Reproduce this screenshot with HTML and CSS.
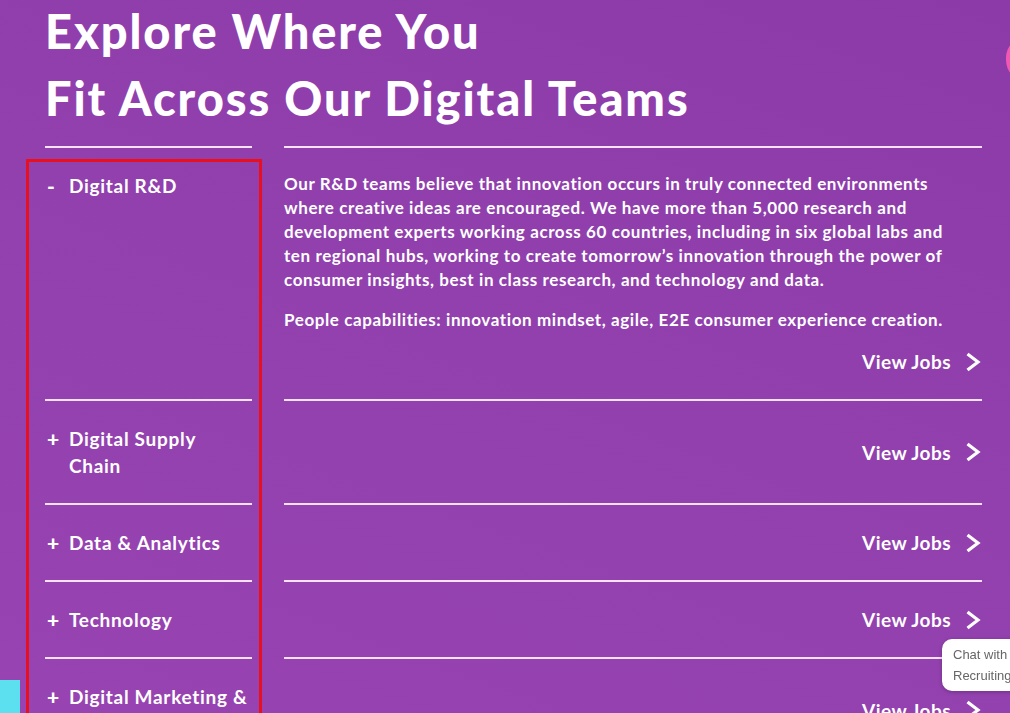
FILE: index.html
```html
<!DOCTYPE html>
<html lang="en">
<head>
<meta charset="utf-8">
<title>Explore Where You Fit Across Our Digital Teams</title>
<link rel="stylesheet" href="styles.css">
</head>
<body>
<main class="page">
  <section class="teams">
    <h1 class="title">Explore Where You<br>Fit Across Our Digital Teams</h1>
    <div class="accordion">
      <div class="highlight"></div>

      <div class="row open">
        <div class="name"><span class="sign">-</span><span>Digital R&amp;D</span></div>
        <div class="detail">
          <p>Our R&amp;D teams believe that innovation occurs in truly connected environments where creative ideas are encouraged. We have more than 5,000 research and development experts working across 60 countries, including in six global labs and ten regional hubs, working to create tomorrow’s innovation through the power of consumer insights, best in class research, and technology and data.</p>
          <p>People capabilities: innovation mindset, agile, E2E consumer experience creation.</p>
          <a class="jobs" href="#">View Jobs <svg viewBox="0 0 16 20" width="16" height="20"><path d="M2.5 2 L13 10 L2.5 18" fill="none" stroke="#fff" stroke-width="3.2" stroke-linejoin="miter"/></svg></a>
        </div>
      </div>

      <div class="row">
        <div class="name"><span class="sign">+</span><span>Digital Supply Chain</span></div>
        <div class="detail">
          <a class="jobs" href="#">View Jobs <svg viewBox="0 0 16 20" width="16" height="20"><path d="M2.5 2 L13 10 L2.5 18" fill="none" stroke="#fff" stroke-width="3.2" stroke-linejoin="miter"/></svg></a>
        </div>
      </div>

      <div class="row">
        <div class="name"><span class="sign">+</span><span>Data &amp; Analytics</span></div>
        <div class="detail">
          <a class="jobs" href="#">View Jobs <svg viewBox="0 0 16 20" width="16" height="20"><path d="M2.5 2 L13 10 L2.5 18" fill="none" stroke="#fff" stroke-width="3.2" stroke-linejoin="miter"/></svg></a>
        </div>
      </div>

      <div class="row">
        <div class="name"><span class="sign">+</span><span>Technology</span></div>
        <div class="detail">
          <a class="jobs" href="#">View Jobs <svg viewBox="0 0 16 20" width="16" height="20"><path d="M2.5 2 L13 10 L2.5 18" fill="none" stroke="#fff" stroke-width="3.2" stroke-linejoin="miter"/></svg></a>
        </div>
      </div>

      <div class="row">
        <div class="name"><span class="sign">+</span><span>Digital Marketing &amp; eCommerce</span></div>
        <div class="detail">
          <a class="jobs" href="#">View Jobs <svg viewBox="0 0 16 20" width="16" height="20"><path d="M2.5 2 L13 10 L2.5 18" fill="none" stroke="#fff" stroke-width="3.2" stroke-linejoin="miter"/></svg></a>
        </div>
      </div>
    </div>
  </section>
</main>

<div class="pink-tab"></div>
<div class="cyan-tab"></div>
<div class="chat">Chat with<br>Recruiting</div>
</body>
</html>
```

FILE: styles.css
```css
html, body {
  margin: 0;
  padding: 0;
}

body {
  background: linear-gradient(200deg, #8c3aa8 0%, #9140ae 45%, #9844b2 100%);
  min-height: 100vh;
  color: #fff;
  font-family: "Lato", "Noto Sans", sans-serif;
  overflow: hidden;
}

.page {
  padding: 0 28px 0 45px;
}

.title {
  margin: -2px 0 0;
  font-family: "Lato", sans-serif;
  font-weight: 900;
  font-size: 47px;
  line-height: 67px;
  letter-spacing: 1.9px;
  color: #fff;
}

.accordion {
  position: relative;
  margin-top: 14px;
}

.highlight {
  position: absolute;
  left: -19px;
  top: 13px;
  width: 230px;
  height: 700px;
  border: 3px solid #e8101e;
  pointer-events: none;
}

.row {
  display: grid;
  grid-template-columns: 207px 1fr;
  column-gap: 32px;
}

.name,
.detail {
  border-top: 2px solid rgba(255, 240, 255, 0.92);
  padding: 24px 0;
}

.name {
  display: flex;
  padding-right: 4px;
  font-weight: 700;
  font-size: 19px;
  line-height: 27px;
  letter-spacing: 0.7px;
}

.sign {
  flex: 0 0 24px;
  padding-left: 2px;
  box-sizing: border-box;
  font-size: 21px;
  font-weight: 900;
  letter-spacing: 0;
}

.detail {
  display: flex;
  flex-direction: column;
  justify-content: center;
}

.detail p {
  margin: 0 0 16px;
  padding-right: 24px;
  font-weight: 700;
  font-size: 17px;
  line-height: 24px;
  letter-spacing: 0.6px;
}

.jobs {
  align-self: flex-end;
  display: flex;
  align-items: center;
  gap: 14px;
  margin-right: 1px;
  color: #fff;
  text-decoration: none;
  font-weight: 700;
  font-size: 19px;
  line-height: 27px;
  letter-spacing: 0.45px;
}

.pink-tab {
  position: fixed;
  right: -40px;
  top: 36px;
  width: 44px;
  height: 46px;
  border-radius: 22px;
  background: #f257b4;
}

.cyan-tab {
  position: fixed;
  left: 0;
  bottom: 0;
  width: 20px;
  height: 33px;
  background: #5cdfee;
}

.chat {
  position: fixed;
  left: 942px;
  top: 639px;
  width: 90px;
  height: 52px;
  box-sizing: border-box;
  padding: 5px 0 0 11px;
  background: #fff;
  border-radius: 10px;
  box-shadow: 0 1px 4px rgba(0, 0, 0, 0.25);
  color: #666;
  font-family: "Liberation Sans", sans-serif;
  font-size: 13px;
  line-height: 21px;
  white-space: nowrap;
  overflow: hidden;
}
```
